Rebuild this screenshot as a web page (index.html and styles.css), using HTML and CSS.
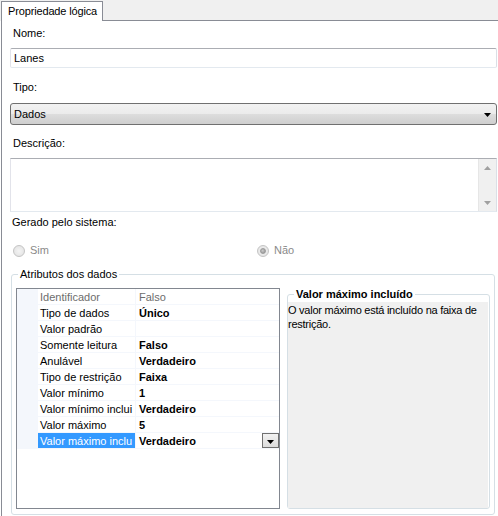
FILE: index.html
```html
<!DOCTYPE html>
<html>
<head>
<meta charset="utf-8">
<link rel="stylesheet" href="styles.css">
</head>
<body>
<div class="window">
  <div class="tabstrip">
    <div class="tab">Propriedade lógica</div>
    <div class="strip-rest"></div>
  </div>
  <div class="page">
    <div class="label l-nome">Nome:</div>
    <div class="textbox">Lanes</div>
    <div class="label l-tipo">Tipo:</div>
    <div class="combo">
      <span>Dados</span>
      <svg class="combo-arrow" width="7" height="4" viewBox="0 0 7 4"><path d="M0 0H7L3.5 4Z" fill="#000"/></svg>
    </div>
    <div class="label l-desc">Descrição:</div>
    <div class="memo">
      <div class="memo-text"></div>
      <div class="vscroll">
        <svg width="7" height="4" viewBox="0 0 7 4"><path d="M3.5 0L7 4H0Z" fill="#a0a0a0"/></svg>
        <svg width="7" height="4" viewBox="0 0 7 4"><path d="M0 0H7L3.5 4Z" fill="#a0a0a0"/></svg>
      </div>
    </div>
    <div class="label l-gerado">Gerado pelo sistema:</div>
    <div class="radios">
      <div class="radio-item r-sim"><span class="radio"></span><span class="radio-text">Sim</span></div>
      <div class="radio-item r-nao"><span class="radio checked"></span><span class="radio-text">Não</span></div>
    </div>
    <div class="group">
      <div class="group-legend">Atributos dos dados</div>
      <div class="group-body">
        <div class="pgrid">
          <div class="prow readonly"><span class="gut"></span><span class="pname">Identificador</span><span class="pval">Falso</span></div>
          <div class="prow"><span class="gut"></span><span class="pname">Tipo de dados</span><span class="pval">Único</span></div>
          <div class="prow"><span class="gut"></span><span class="pname">Valor padrão</span><span class="pval"></span></div>
          <div class="prow"><span class="gut"></span><span class="pname">Somente leitura</span><span class="pval">Falso</span></div>
          <div class="prow"><span class="gut"></span><span class="pname">Anulável</span><span class="pval">Verdadeiro</span></div>
          <div class="prow"><span class="gut"></span><span class="pname">Tipo de restrição</span><span class="pval">Faixa</span></div>
          <div class="prow"><span class="gut"></span><span class="pname">Valor mínimo</span><span class="pval">1</span></div>
          <div class="prow"><span class="gut"></span><span class="pname">Valor mínimo inclui</span><span class="pval">Verdadeiro</span></div>
          <div class="prow"><span class="gut"></span><span class="pname">Valor máximo</span><span class="pval">5</span></div>
          <div class="prow selected"><span class="gut"></span><span class="pname">Valor máximo inclu</span><span class="pval">Verdadeiro<span class="dd-btn"><svg width="7" height="4" viewBox="0 0 7 4"><path d="M0 0H7L3.5 4Z" fill="#000"/></svg></span></span></div>
        </div>
        <div class="descbox">
          <div class="desc-legend">Valor máximo incluído</div>
          <div class="desc-body">O valor máximo está incluído na faixa de restrição.</div>
        </div>
      </div>
    </div>
  </div>
</div>
</body>
</html>
```

FILE: styles.css
```css
html, body {
  margin: 0;
  padding: 0;
  background: #ffffff;
}
body {
  font-family: "Liberation Sans", Arial, sans-serif;
  font-size: 11px;
  color: #000;
  width: 498px;
  height: 516px;
  overflow: hidden;
}
.window {
  width: 498px;
  height: 516px;
  display: flex;
  flex-direction: column;
}
.tabstrip {
  display: flex;
  height: 21px;
  background: #f0f0f0;
  flex: none;
}
.tab {
  margin-left: 1px;
  margin-top: 1px;
  width: 102px;
  height: 20px;
  box-sizing: border-box;
  background: #fff;
  border: 1px solid #898c95;
  border-bottom: none;
  line-height: 18px;
  padding-left: 6px;
  white-space: nowrap;
  letter-spacing: -0.15px;
}
.strip-rest {
  flex: 1;
  border-bottom: 1px solid #898c95;
}
.page {
  flex: 1;
  margin-left: 1px;
  border-left: 1px solid #898c95;
  padding-left: 8px;
  display: flex;
  flex-direction: column;
  align-items: flex-start;
}
.label {
  height: 13px;
  line-height: 13px;
  padding-left: 3px;
  white-space: nowrap;
}
.l-nome { margin-top: 6px; }
.l-tipo { margin-top: 13px; }
.l-desc { margin-top: 12px; }
.l-gerado { margin-top: 4px; padding-left: 2px; }
.textbox {
  margin-top: 8px;
  width: 487px;
  height: 20px;
  box-sizing: border-box;
  border: 1px solid;
  border-color: #abadb3 #dbdfe6 #e3e9ef #e2e3ea;
  border-radius: 2px;
  line-height: 18px;
  padding-left: 3px;
}
.combo {
  margin-top: 9px;
  width: 487px;
  height: 22px;
  box-sizing: border-box;
  border: 1px solid #707070;
  border-radius: 3px;
  background: linear-gradient(to bottom, #f2f2f2 0%, #ebebeb 50%, #dddddd 50%, #cfcfcf 100%);
  display: flex;
  align-items: center;
  justify-content: space-between;
  padding: 0 5px 0 3px;
}
.combo-arrow { margin-top: 1px; }
.memo {
  margin-top: 8px;
  width: 487px;
  height: 54px;
  box-sizing: border-box;
  border: 1px solid;
  border-color: #abadb3 #dbdfe6 #e3e9ef #e2e3ea;
  display: flex;
}
.memo-text { flex: 1; }
.vscroll {
  width: 17px;
  background: #f0f0f0;
  border-left: 1px solid #e6e6e6;
  display: flex;
  flex-direction: column;
  justify-content: space-between;
  align-items: center;
  padding: 7px 0 6px;
}
.radios {
  margin-top: 15px;
  height: 13px;
  display: flex;
  align-items: center;
  padding-left: 3px;
}
.radio-item {
  display: flex;
  align-items: center;
}
.r-nao { margin-left: 208px; }
.radio {
  width: 10px;
  height: 10px;
  border: 1px solid #c4c4c4;
  border-radius: 50%;
  background: radial-gradient(circle at 50% 50%, #f4f4f4 0%, #e0e0e0 100%);
  box-sizing: content-box;
  display: flex;
  align-items: center;
  justify-content: center;
}
.radio.checked::after {
  content: "";
  width: 4px;
  height: 4px;
  border-radius: 50%;
  background: radial-gradient(circle at 40% 40%, #c8c8c8, #8e8e8e);
  border: 1px solid #9a9a9a;
}
.radio-text {
  margin-left: 5px;
  color: #8a8a8a;
  line-height: 13px;
}
.group {
  margin-top: 17px;
  margin-left: 1px;
  width: 484px;
  height: 241px;
  box-sizing: border-box;
  border: 1px solid #d5dfe5;
  border-radius: 3px;
  display: flex;
  flex-direction: column;
}
.group-legend {
  align-self: flex-start;
  margin-top: -7px;
  margin-left: 6px;
  padding: 0 2px 0 2px;
  background: #fff;
  height: 13px;
  line-height: 13px;
}
.group-body {
  display: flex;
  align-items: flex-start;
  padding-left: 4px;
  margin-top: 7px;
}
.pgrid {
  width: 264px;
  height: 221px;
  box-sizing: border-box;
  border: 1px solid #828790;
  display: flex;
  flex-direction: column;
}
.prow {
  display: flex;
  height: 16px;
  flex: none;
}
.gut {
  width: 21px;
  background: #f4f7fc;
  flex: none;
}
.pname {
  width: 98px;
  flex: none;
  box-sizing: border-box;
  border-bottom: 1px solid #f4f7fc;
  border-right: 1px solid #f4f7fc;
  padding-left: 2px;
  line-height: 17px;
  white-space: nowrap;
  overflow: hidden;
}
.pval {
  flex: 1;
  box-sizing: border-box;
  border-bottom: 1px solid #f4f7fc;
  padding-left: 3px;
  line-height: 17px;
  font-weight: bold;
  white-space: nowrap;
  display: flex;
  justify-content: space-between;
  overflow: hidden;
}
.readonly .pname, .readonly .pval {
  color: #6d6d6d;
  font-weight: normal;
}
.selected .pname {
  background: #3399ff;
  color: #fff;
}
.dd-btn {
  width: 17px;
  height: 15px;
  box-sizing: border-box;
  border: 1px solid #707070;
  background: linear-gradient(to bottom, #f2f2f2, #dcdcdc);
  display: flex;
  align-items: center;
  justify-content: center;
}
.dd-btn svg { margin-top: 2px; }
.descbox {
  margin-left: 7px;
  margin-top: 6px;
  width: 203px;
  height: 215px;
  box-sizing: border-box;
  border: 1px solid #d5dfe5;
  border-radius: 3px;
  display: flex;
  flex-direction: column;
}
.desc-legend {
  align-self: flex-start;
  margin-top: -7px;
  margin-left: 6px;
  padding: 0 2px;
  background: #fff;
  font-weight: bold;
  height: 13px;
  line-height: 13px;
}
.desc-body {
  margin: 1px 1px 0 0;
  flex: 1;
  background: #f0f0f0;
  line-height: 14px;
  padding-top: 1px;
  letter-spacing: -0.25px;
}
```
